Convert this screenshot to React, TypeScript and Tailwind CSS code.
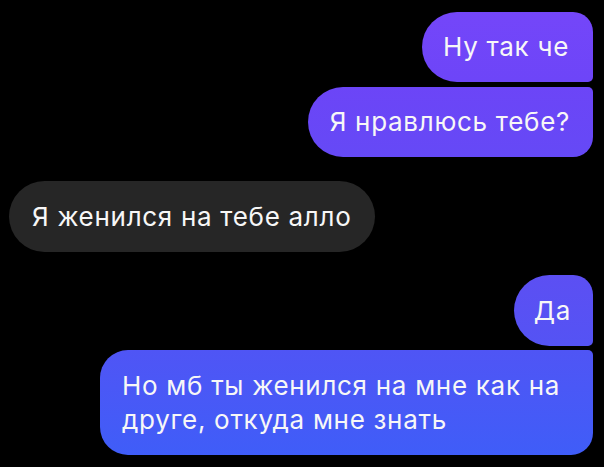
import React from "react";

export default function App() {
  const font = { fontFamily: "Inter, 'Noto Sans', sans-serif" };
  return (
    <div
      className="w-[604px] h-[467px] bg-black overflow-hidden flex flex-col pt-[12px] pl-[9px] pr-[11px] text-[#f7f7f7] text-[26px] leading-[34px] tracking-[0.7px]"
      style={font}
    >
      <div className="flex flex-col items-end gap-[5px]">
        <div className="h-[70px] flex items-center pl-[21px] pr-[24px] rounded-l-[35px] rounded-tr-[20px] rounded-br-[5px] bg-gradient-to-b from-[#7446f9] to-[#6d45f8]">
          Ну так че
        </div>
        <div className="h-[70px] flex items-center pl-[22px] pr-[23px] rounded-l-[35px] rounded-tr-[5px] rounded-br-[20px] bg-gradient-to-b from-[#6c45f7] to-[#6549f6]">
          Я нравлюсь тебе?
        </div>
      </div>
      <div className="flex mt-[24px]">
        <div className="h-[71px] flex items-center pl-[23px] pr-[24px] rounded-[36px] bg-[#262626]">
          Я женился на тебе алло
        </div>
      </div>
      <div className="flex flex-col items-end gap-[4px] mt-[23px]">
        <div className="h-[71px] flex items-center pl-[20px] pr-[22px] rounded-l-[36px] rounded-tr-[20px] rounded-br-[5px] bg-gradient-to-b from-[#5c4ff3] to-[#5453f4]">
          Да
        </div>
        <div className="w-[493px] h-[105px] flex items-center pl-[22px] pr-[20px] rounded-l-[28px] rounded-tr-[5px] rounded-br-[22px] bg-gradient-to-b from-[#4f55f5] to-[#3f5df8]">
          <span className="whitespace-nowrap">
            Но мб ты женился на мне как на
            <br />
            друге, откуда мне знать
          </span>
        </div>
      </div>
    </div>
  );
}
